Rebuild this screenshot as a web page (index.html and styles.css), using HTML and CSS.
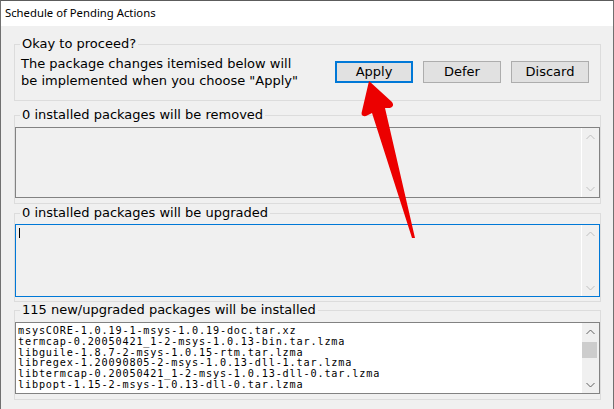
FILE: index.html
```html
<!DOCTYPE html>
<html>
<head>
<meta charset="utf-8">
<link rel="stylesheet" href="styles.css">
</head>
<body>
<div class="window">
  <div class="titlebar">Schedule of Pending Actions</div>
  <div class="content">
    <fieldset class="group g1">
      <legend>Okay to proceed?</legend>
      <div class="prompt">
        <p class="message">The package changes itemised below will<br>be implemented when you choose "Apply"</p>
        <div class="buttons">
          <button class="btn default">Apply</button>
          <button class="btn">Defer</button>
          <button class="btn">Discard</button>
        </div>
      </div>
    </fieldset>

    <fieldset class="group g2">
      <legend>0 installed packages will be removed</legend>
      <div class="listbox empty h71">
        <div class="items"></div>
        <div class="scrollbar disabled">
          <span class="sb-btn"><svg width="9" height="6" viewBox="0 0 9 6"><path d="M0.5 5 L4.5 1 L8.5 5" fill="none" stroke="currentColor" stroke-width="1"/></svg></span>
          <span class="sb-track"></span>
          <span class="sb-btn"><svg width="9" height="6" viewBox="0 0 9 6"><path d="M0.5 1 L4.5 5 L8.5 1" fill="none" stroke="currentColor" stroke-width="1"/></svg></span>
        </div>
      </div>
    </fieldset>

    <fieldset class="group g3">
      <legend>0 installed packages will be upgraded</legend>
      <div class="listbox empty focused h73">
        <div class="items"><span class="caret"></span></div>
        <div class="scrollbar disabled">
          <span class="sb-btn"><svg width="9" height="6" viewBox="0 0 9 6"><path d="M0.5 5 L4.5 1 L8.5 5" fill="none" stroke="currentColor" stroke-width="1"/></svg></span>
          <span class="sb-track"></span>
          <span class="sb-btn"><svg width="9" height="6" viewBox="0 0 9 6"><path d="M0.5 1 L4.5 5 L8.5 1" fill="none" stroke="currentColor" stroke-width="1"/></svg></span>
        </div>
      </div>
    </fieldset>

    <fieldset class="group g4">
      <legend>115 new/upgraded packages will be installed</legend>
      <div class="listbox filled h72">
        <div class="items mono">
          <div class="row">msysCORE-1.0.19-1-msys-1.0.19-doc.tar.xz</div>
          <div class="row">termcap-0.20050421_1-2-msys-1.0.13-bin.tar.lzma</div>
          <div class="row">libguile-1.8.7-2-msys-1.0.15-rtm.tar.lzma</div>
          <div class="row">libregex-1.20090805-2-msys-1.0.13-dll-1.tar.lzma</div>
          <div class="row">libtermcap-0.20050421_1-2-msys-1.0.13-dll-0.tar.lzma</div>
          <div class="row">libpopt-1.15-2-msys-1.0.13-dll-0.tar.lzma</div>
        </div>
        <div class="scrollbar">
          <span class="sb-btn"><svg width="9" height="6" viewBox="0 0 9 6"><path d="M0.5 5 L4.5 1 L8.5 5" fill="none" stroke="currentColor" stroke-width="1"/></svg></span>
          <span class="sb-track"><span class="sb-thumb"></span></span>
          <span class="sb-btn"><svg width="9" height="6" viewBox="0 0 9 6"><path d="M0.5 1 L4.5 5 L8.5 1" fill="none" stroke="currentColor" stroke-width="1"/></svg></span>
        </div>
      </div>
    </fieldset>
  </div>

  <svg class="arrow" width="614" height="409" viewBox="0 0 614 409">
    <path d="M369 81 L392 102 Q395 106 390 108 L385 108 L415 238 L412 238 L372 113 L366 116 Q360 117 362 111 Z" fill="#ec0000"/>
  </svg>
</div>
</body>
</html>
```

FILE: styles.css
```css
* { box-sizing: border-box; }

html, body {
  margin: 0;
  padding: 0;
  width: 614px;
  height: 409px;
  overflow: hidden;
  background: #f0f0f0;
}

body {
  font-family: "DejaVu Sans", "Noto Sans", sans-serif;
  font-size: 13px;
  color: #000;
}

.window {
  position: relative;
  width: 614px;
  height: 409px;
  border-top: 1px solid #5c5c5c;
  border-left: 1px solid #707070;
  border-right: 1px solid #707070;
  background: #f0f0f0;
}

.titlebar {
  height: 25px;
  background: #fff;
  padding-left: 4px;
  line-height: 24px;
  font-family: "Noto Sans", sans-serif;
  font-size: 11.3px;
}

.content {
  padding: 10px 12px 0 13px;
}

.group {
  margin: 0;
  padding: 0;
  border: 1px solid #dcdcdc;
  min-width: 0;
}

.group legend {
  margin-left: 5px;
  padding: 0 2px;
  line-height: 16px;
  height: 16px;
}

.g1 { padding-right: 11px; padding-bottom: 9px; }
.g2 { margin-top: 6px; padding-bottom: 5px; }
.g3 { margin-top: 1px; padding-bottom: 4px; }
.g4 { margin-top: 0; padding-bottom: 5px; }

.g2 .listbox { margin-top: 4px; }
.g3 .listbox { margin-top: 3px; }
.g4 .listbox { margin-top: 4px; }

.prompt {
  display: flex;
  align-items: center;
  justify-content: space-between;
  height: 38px;
  margin-top: 1px;
  padding-left: 6px;
}

.message {
  margin: 0;
  line-height: 17px;
  white-space: nowrap;
}

.buttons {
  display: flex;
  gap: 10px;
}

.btn {
  width: 78px;
  height: 22px;
  padding: 0;
  font-family: inherit;
  font-size: 13px;
  color: #000;
  background: #e1e1e1;
  border: 1px solid #adadad;
  border-radius: 0;
  line-height: 18px;
}

.btn.default {
  border: 2px solid #0078d7;
}

.listbox {
  display: flex;
  border: 1px solid #828282;
}

.h71 { height: 71px; }
.h73 { height: 73px; }
.h72 { height: 72px; }

.listbox.empty { background: #f0f0f0; }
.listbox.filled { background: #fff; }
.listbox.focused { border-color: #0078d7; }

.items {
  flex: 1;
  min-width: 0;
  padding: 3px 2px;
}

.caret {
  display: block;
  width: 1px;
  height: 10px;
  margin-left: 1px;
  background: #000;
}

.mono {
  font-family: "DejaVu Sans Mono", "Liberation Mono", monospace;
  font-size: 10.2px;
  letter-spacing: 0.83px;
  line-height: 10.8px;
  padding: 3px 2px;
  overflow: hidden;
}

.mono .row {
  white-space: nowrap;
  height: 10.8px;
}

.scrollbar {
  width: 18px;
  display: flex;
  flex-direction: column;
  background: #f0f0f0;
  border-left: 1px solid #fff;
  color: #606060;
}

.scrollbar.disabled { color: #bfbfbf; }

.sb-btn {
  height: 17px;
  display: flex;
  align-items: center;
  justify-content: center;
}

.sb-track {
  flex: 1;
  position: relative;
}

.sb-thumb {
  position: absolute;
  left: 0;
  top: 2px;
  width: 15px;
  height: 16px;
  background: #cdcdcd;
}

.arrow {
  position: absolute;
  left: -1px;
  top: -1px;
  pointer-events: none;
}
```
